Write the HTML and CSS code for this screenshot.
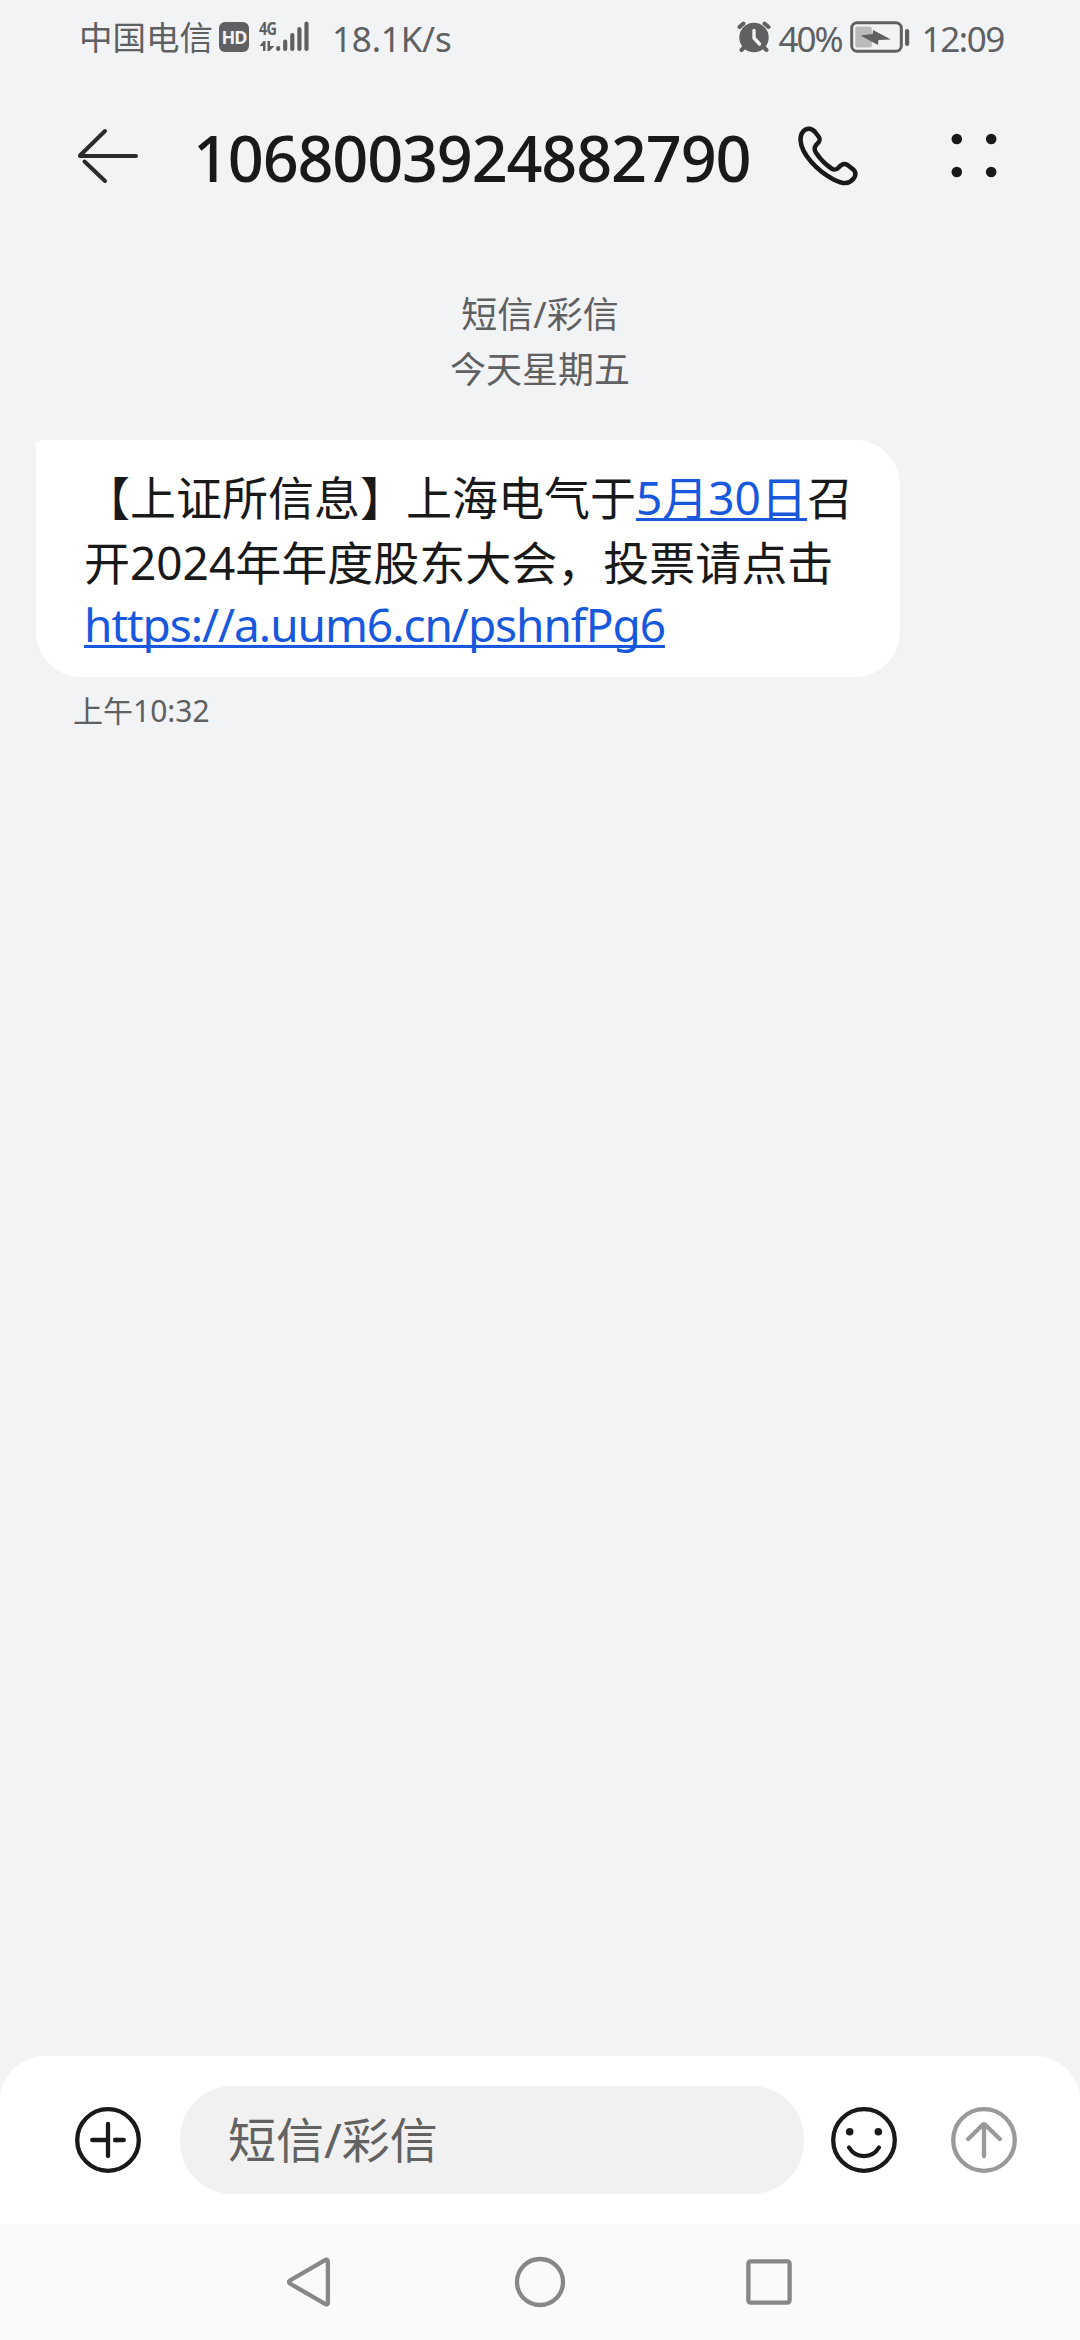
FILE: index.html
```html
<!DOCTYPE html>
<html lang="zh-CN">
<head>
    <meta charset="UTF-8">
    <meta name="viewport" content="width=device-width, initial-scale=1.0">
    <title>短信</title>
    <link rel="stylesheet" href="styles.css">
</head>
<body>
    <div class="status-bar">
        <div class="status-left">
            <span class="carrier">中国电信</span>
            <span class="hd-badge">HD</span>
            <div class="network">
                <div class="network-type">
                    <span>4G</span>
                    <svg width="16" height="12" viewBox="0 0 16 12" fill="#5f6062">
                        <path d="M4.5 1H6.5V11H4V6H0.5Z"/>
                        <path d="M8.5 1H11V6H15.5L10.5 11H8.5Z"/>
                    </svg>
                </div>
                <svg class="signal" width="34" height="32" viewBox="0 0 34 32" stroke="#5f6062" stroke-width="4.2" stroke-linecap="round">
                    <path d="M2.2 28V29M9.2 21.5V29M16.3 15V29M23.4 9V29M30.5 3.5V29"/>
                </svg>
            </div>
            <span class="speed">18.1K/s</span>
        </div>
        <div class="status-right">
            <svg class="alarm" width="34" height="32" viewBox="0 0 34 32">
                <circle cx="17" cy="16.5" r="14.7" fill="#5f6062"/>
                <path d="M2.5 6L6.5 2.5M31.5 6L27.5 2.5M7 26.5L4.5 29M27 26.5L29.5 29" stroke="#5f6062" stroke-width="4" stroke-linecap="round"/>
                <path d="M17 9.5V17L22.5 23" fill="none" stroke="#f1f3f5" stroke-width="3.4" stroke-linecap="round" stroke-linejoin="round"/>
            </svg>
            <span class="percent">40%</span>
            <svg class="battery" width="60" height="32" viewBox="0 0 60 32">
                <rect x="1.7" y="1.7" width="49.6" height="28.6" rx="5.5" fill="none" stroke="#5f6062" stroke-width="3"/>
                <rect x="5.3" y="5.5" width="16.5" height="21" rx="2" fill="#b8babb"/>
                <path d="M10.5 14.5L22.5 13L23 9L41 18.5L28.5 19L28 24Z" fill="#5f6062"/>
                <rect x="55" y="8" width="4.2" height="17" rx="2.1" fill="#5f6062"/>
            </svg>
            <span class="clock">12:09</span>
        </div>
    </div>

    <header>
        <svg class="back" width="62" height="56" viewBox="0 0 62 56" fill="none" stroke="#2b2b2c" stroke-width="4" stroke-linecap="round">
            <path d="M4 28H60M4 27.5L29 3"/>
            <path d="M8.5 33.5L29 53"/>
        </svg>
        <h1>1068003924882790</h1>
        <svg class="call" width="62" height="62" viewBox="0 0 62 62" fill="none" stroke="#191919" stroke-width="4.5" stroke-linejoin="round">
            <path d="M3.5 15C3.3 8.5 7 3.7 12 3.7C15 3.7 16.5 5 18.5 7.5L21.5 11.5C23.5 14.3 23 16 20.5 18.5C17 21.5 16.6 24 18.7 27.3C22.8 33.7 28 39.2 34.5 43.5C37.5 45.5 39.6 45 42.4 41.8C44.8 39 47.5 38.2 50.5 40L56 44.3C59.5 47.2 58.9 50.8 56.5 53.8C51.7 59.5 46 59.2 37 54.7C20 46 4.3 29 3.5 15Z"/>
        </svg>
        <svg class="more" width="48" height="48" viewBox="0 0 48 48" fill="#191919">
            <circle cx="6.8" cy="7" r="5.3"/>
            <circle cx="41.2" cy="7" r="5.3"/>
            <circle cx="6.8" cy="40" r="5.3"/>
            <circle cx="41.2" cy="40" r="5.3"/>
        </svg>
    </header>

    <main>
        <div class="thread-info">
            <div>短信/彩信</div>
            <div>今天星期五</div>
        </div>
        <div class="bubble">
            <div class="line">【上证所信息】上海电气于<a href="#">5月30日</a>召</div>
            <div class="line">开2024年年度股东大会，投票请点击</div>
            <div class="line url"><a href="#">https://a.uum6.cn/pshnfPg6</a></div>
        </div>
        <div class="time">上午10:32</div>
    </main>

    <div class="composer">
        <svg width="66" height="66" viewBox="0 0 66 66" fill="none" stroke="#191919" stroke-width="4.3" stroke-linecap="round">
            <circle cx="33" cy="33" r="30.8"/>
            <path d="M33 17V49M17.2 33H33M40.5 33H48.8"/>
            <path d="M38.3 33H43" stroke-linecap="butt"/>
        </svg>
        <div class="input">短信/彩信</div>
        <svg class="emoji" width="66" height="66" viewBox="0 0 66 66" fill="none" stroke="#191919" stroke-width="4.3" stroke-linecap="round">
            <circle cx="33" cy="33" r="30.8"/>
            <circle cx="18.7" cy="24.7" r="3.8" fill="#191919" stroke="none"/>
            <circle cx="47.3" cy="24.7" r="3.8" fill="#191919" stroke="none"/>
            <path d="M18 40.5C25 52 41 52 48 40.5"/>
        </svg>
        <svg class="send" width="66" height="66" viewBox="0 0 66 66" fill="none" stroke="#999" stroke-width="4.3" stroke-linecap="round" stroke-linejoin="round">
            <circle cx="33" cy="33" r="30.8"/>
            <path d="M33 18V49M17.2 32L31.5 18Q33 16.5 34.5 18L48.8 32"/>
        </svg>
    </div>

    <nav>
        <svg width="52" height="52" viewBox="0 0 52 52" fill="none" stroke="#878787" stroke-width="4.3" stroke-linejoin="round">
            <path d="M40 4.2Q42.9 2.6 42.9 5.5V46.5Q42.9 49.4 40 47.8L4.9 27.5Q2.9 26 4.9 24.5Z"/>
        </svg>
        <svg width="52" height="52" viewBox="0 0 52 52" fill="none" stroke="#878787" stroke-width="4.3">
            <circle cx="26" cy="26" r="23"/>
        </svg>
        <svg width="52" height="52" viewBox="0 0 52 52" fill="none" stroke="#878787" stroke-width="4.3">
            <rect x="5.4" y="5.4" width="41.2" height="41.2" rx="2"/>
        </svg>
    </nav>
</body>
</html>
```

FILE: styles.css
```css
body {
    font-family: "Noto Sans", "Noto Sans CJK SC", sans-serif;
    background-color: #f1f3f5;
    color: #191919;
    margin: 0;
    width: 1080px;
    height: 2340px;
    display: flex;
    flex-direction: column;
    overflow: hidden;
}
svg {
    display: block;
    flex-shrink: 0;
}
.status-bar {
    height: 76px;
    padding: 0 76px 0 79px;
    display: flex;
    justify-content: space-between;
    align-items: center;
    box-sizing: border-box;
    color: #5f6062;
    white-space: nowrap;
}
.status-left,
.status-right {
    display: flex;
    align-items: center;
    height: 76px;
    line-height: 75px;
}
.carrier {
    font-size: 33.5px;
    width: 140px;
    margin-top: -1px;
}
.hd-badge {
    width: 30px;
    height: 30px;
    line-height: 30px;
    border-radius: 6px;
    background-color: #5f6062;
    color: #f1f3f5;
    font-size: 18px;
    font-weight: 700;
    letter-spacing: -1px;
    text-align: center;
    margin-top: -3px;
}
.network {
    display: flex;
    height: 32px;
    margin: -4px 0 0 10px;
}
.network-type {
    width: 18px;
    line-height: 17px;
    font-size: 17px;
    font-weight: 700;
    letter-spacing: -1px;
}
.network-type span {
    display: block;
    height: 20px;
    transform: scaleX(0.85);
    transform-origin: left;
}
.signal {
    margin-left: -1px;
}
.speed {
    font-size: 35px;
    letter-spacing: -0.2px;
    margin-left: 22px;
}
.alarm {
    margin-top: -3px;
}
.percent {
    font-size: 35px;
    letter-spacing: -2px;
    margin-left: 7px;
}
.battery {
    margin: -3px 12px 0 8px;
}
.clock {
    font-size: 35px;
    letter-spacing: -1.4px;
}
header {
    height: 160px;
    padding: 0 82px 0 76px;
    display: flex;
    align-items: center;
    box-sizing: border-box;
}
h1 {
    font-size: 63px;
    font-weight: 500;
    letter-spacing: -1.2px;
    line-height: 160px;
    margin: 3px 0 0 55px;
    width: 604px;
}
.more {
    margin-left: auto;
}
main {
    flex: 1;
    padding: 51px 36px 0;
}
.thread-info {
    font-size: 36px;
    line-height: 55px;
    color: #5f6062;
    text-align: center;
}
.bubble {
    width: 864px;
    height: 237px;
    margin-top: 43px;
    padding: 25px 0 0 48px;
    box-sizing: border-box;
    border-radius: 6px 45px 45px 45px;
    background-color: #fff;
    font-size: 46px;
    white-space: nowrap;
}
.line {
    height: 65px;
    line-height: 65px;
}
.bubble a {
    color: #1858dc;
    text-decoration: underline;
    text-decoration-thickness: 3px;
    text-underline-offset: 3px;
    text-decoration-skip-ink: none;
}
.url {
    height: 61px;
    line-height: 59px;
    letter-spacing: -1.05px;
}
.time {
    font-size: 30px;
    line-height: 40px;
    color: #5f6062;
    margin: 14px 0 0 37px;
}
.composer {
    height: 168px;
    padding: 0 63px 0 75px;
    display: flex;
    align-items: center;
    box-sizing: border-box;
    border-radius: 45px 45px 0 0;
    background-color: #fff;
}
.input {
    width: 624px;
    height: 108px;
    line-height: 108px;
    margin: 0 27px 0 39px;
    padding-left: 48px;
    box-sizing: border-box;
    border-radius: 52px;
    background-color: #f1f1f1;
    color: #626262;
    font-size: 48px;
}
.send {
    margin-left: 54px;
}
nav {
    height: 116px;
    display: flex;
    justify-content: center;
    align-items: center;
    gap: 177px;
    background-color: #fafafa;
}
```
